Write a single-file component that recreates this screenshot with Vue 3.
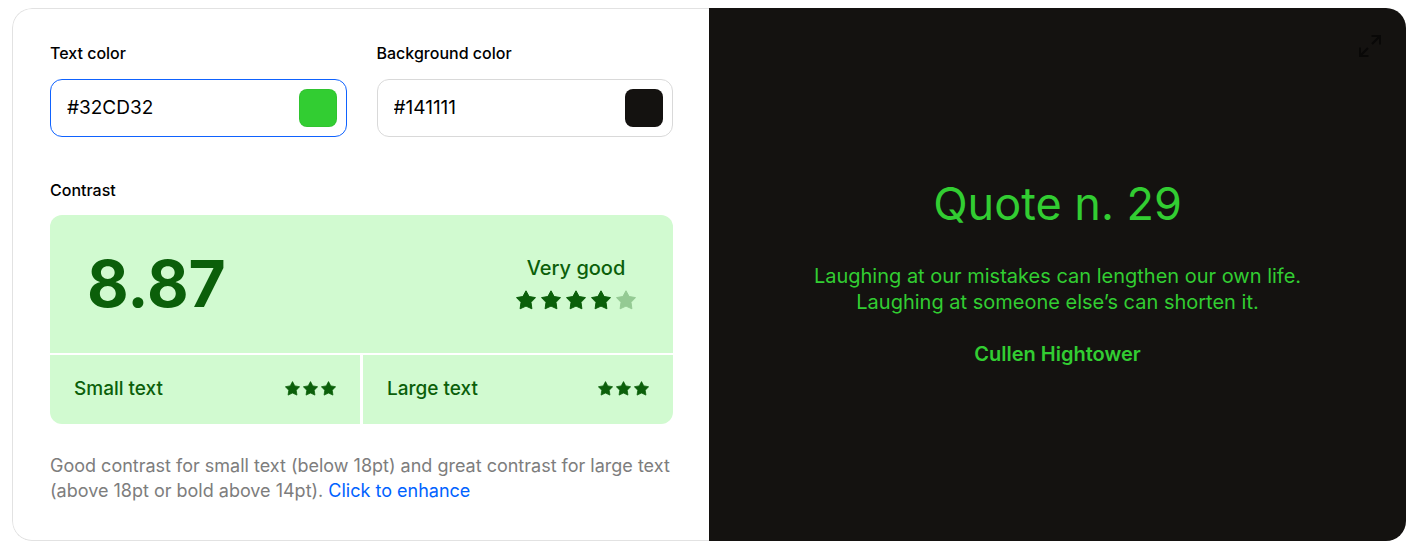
<script setup>
import { reactive } from 'vue'

const fields = reactive([
  { id: 'text-color', label: 'Text color', value: '#32CD32', swatch: '#32cd32', active: true },
  { id: 'background-color', label: 'Background color', value: '#141111', swatch: '#141210', active: false },
])

const sizes = [
  { label: 'Small text', stars: 3 },
  { label: 'Large text', stars: 3 },
]

const starPath =
  'M10 0.8 L13.1 6.5 L19.5 7.6 L15 12.3 L15.9 18.8 L10 16.1 L4.1 18.8 L5 12.3 L0.5 7.6 L6.9 6.5 Z'
</script>

<template>
  <main class="card">
    <section class="controls">
      <div class="fields">
        <div v-for="field in fields" :key="field.id" class="field">
          <label class="label" :for="field.id">{{ field.label }}</label>
          <div class="box" :class="{ active: field.active }">
            <input :id="field.id" v-model="field.value" class="hex" type="text" spellcheck="false" />
            <button
              class="swatch"
              type="button"
              :aria-label="'Pick ' + field.label.toLowerCase()"
              :style="{ backgroundColor: field.swatch }"
            ></button>
          </div>
        </div>
      </div>

      <h2 class="label contrast-label">Contrast</h2>
      <div class="result">
        <div class="score">
          <strong class="ratio">8.87</strong>
          <div class="verdict">
            <span class="verdict-text">Very good</span>
            <span class="stars big">
              <svg v-for="n in 5" :key="n" :class="{ dim: n === 5 }" viewBox="0 0 20 20">
                <path :d="starPath" />
              </svg>
            </span>
          </div>
        </div>
        <div class="sizes">
          <div v-for="size in sizes" :key="size.label" class="size">
            <span>{{ size.label }}</span>
            <span class="stars">
              <svg v-for="n in size.stars" :key="n" viewBox="0 0 20 20">
                <path :d="starPath" />
              </svg>
            </span>
          </div>
        </div>
      </div>

      <p class="note">
        Good contrast for small text (below 18pt) and great contrast for large text (above 18pt or
        bold above 14pt). <a href="#">Click to enhance</a>
      </p>
    </section>

    <section class="preview">
      <button class="expand" type="button" aria-label="Full screen">
        <svg viewBox="0 0 24 24">
          <path d="M14 10 L21.5 2.5 M13.5 2 H22 V10.5 M10 14 L2.5 21.5 M2 13.5 V22 H10.5" />
        </svg>
      </button>
      <h1 class="title">Quote n. 29</h1>
      <p class="quote">
        Laughing at our mistakes can lengthen our own life.
        Laughing at someone else’s can shorten it.
      </p>
      <p class="author">Cullen Hightower</p>
    </section>
  </main>
</template>

<style>
body {
  background: #fff;
}
</style>

<style scoped>
.card {
  display: grid;
  grid-template-columns: minmax(0, 1fr) minmax(0, 1fr);
  margin: 8px 20px 16px 12px;
  border-radius: 20px;
  overflow: hidden;
  font-family: Inter, sans-serif;
  color: #000;
}

.controls {
  padding: 32px 36px 36px 37px;
  border: 1px solid #e2e2e2;
  border-right: 0;
  border-radius: 20px 0 0 20px;
}

.fields {
  display: grid;
  grid-template-columns: minmax(0, 1fr) minmax(0, 1fr);
  gap: 30px;
}

.label {
  display: block;
  margin: 0;
  font-size: 16px;
  font-weight: 500;
  line-height: 24px;
}

.box {
  display: flex;
  align-items: center;
  box-sizing: border-box;
  height: 58px;
  margin-top: 14px;
  padding: 0 9px 0 16px;
  border: 1px solid #d9d9d9;
  border-radius: 12px;
}

.box.active {
  border-color: #0f62fe;
}

.hex {
  flex: 1;
  min-width: 0;
  padding: 0;
  border: 0;
  outline: 0;
  background: none;
  color: #000;
  font: 400 19px/28px Inter, sans-serif;
}

.swatch {
  flex: none;
  width: 38px;
  height: 38px;
  padding: 0;
  border: 1px solid rgba(0, 0, 0, 0.04);
  border-radius: 8px;
}

.contrast-label {
  margin: 41px 0 13px;
}

.result {
  display: grid;
  gap: 2px;
  border-radius: 12px;
  overflow: hidden;
  color: #0b5f0a;
}

.score {
  display: flex;
  align-items: center;
  justify-content: space-between;
  height: 138px;
  padding: 0 37px;
  background: #d1fad0;
}

.ratio {
  font-size: 64px;
  font-weight: 700;
  line-height: 72px;
}

.verdict {
  display: grid;
  justify-items: center;
  gap: 10px;
  padding-bottom: 2px;
}

.verdict-text {
  font-size: 20px;
  font-weight: 500;
  line-height: 24px;
}

.stars {
  display: flex;
  gap: 3px;
}

.stars svg {
  width: 15px;
  height: 15px;
  fill: currentColor;
  stroke: currentColor;
  stroke-width: 1px;
  stroke-linejoin: round;
}

.stars.big {
  gap: 5px;
}

.stars.big svg {
  width: 20px;
  height: 20px;
}

.stars .dim {
  opacity: 0.3;
}

.sizes {
  display: grid;
  grid-template-columns: 1fr 1fr;
  gap: 3px;
}

.size {
  display: flex;
  align-items: center;
  justify-content: space-between;
  box-sizing: border-box;
  height: 69px;
  padding: 0 24px 2px;
  background: #d1fad0;
  font-size: 19px;
  font-weight: 500;
}

.note {
  margin: 29px 0 0;
  padding-bottom: 1px;
  color: #7d7d7d;
  font-size: 18px;
  line-height: 25px;
}

.note a {
  color: #0062ff;
  text-decoration: none;
}

.preview {
  position: relative;
  display: flex;
  flex-direction: column;
  align-items: center;
  justify-content: center;
  padding-bottom: 5px;
  background: #141210;
  color: #32cd32;
  text-align: center;
}

.expand {
  position: absolute;
  top: 26px;
  right: 24px;
  padding: 0;
  border: 0;
  background: none;
  line-height: 0;
}

.expand svg {
  width: 24px;
  height: 24px;
  fill: none;
  stroke: #090807;
  stroke-width: 2px;
}

.title {
  margin: 0 0 32px;
  font-size: 45px;
  font-weight: 400;
  line-height: 54px;
}

.quote {
  max-width: 500px;
  margin: 0 0 26px;
  font-size: 20px;
  line-height: 26px;
}

.author {
  margin: 0;
  font-size: 20px;
  font-weight: 600;
  line-height: 26px;
}
</style>
